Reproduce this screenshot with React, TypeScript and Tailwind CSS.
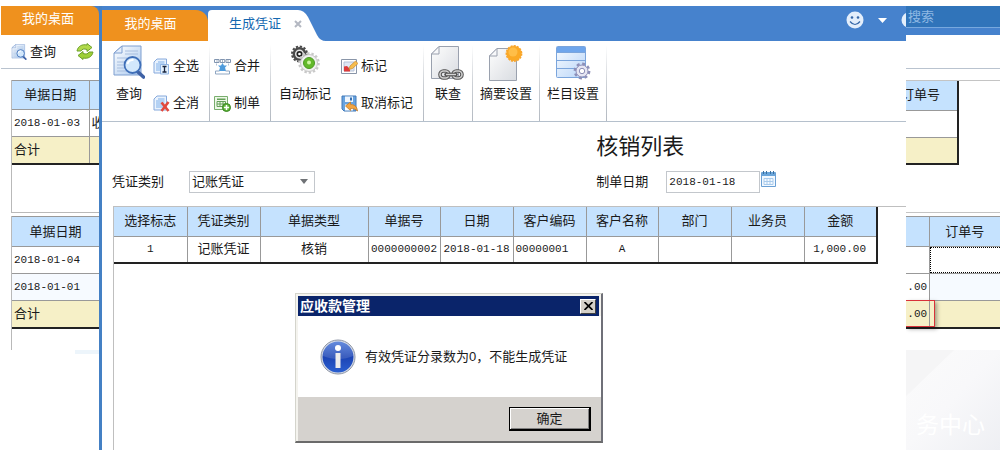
import React, { useState } from 'react';

interface IconProps {
  className?: string;
}

const QueryIcon: React.FC<IconProps> = ({ className }) => (
  <svg viewBox="0 0 32 34" className={className} aria-hidden="true">
    <defs>
      <linearGradient id="sheet" x1="0" y1="0" x2="1" y2="1">
        <stop offset="0" stopColor="#ffffff" />
        <stop offset="1" stopColor="#a9c8ee" />
      </linearGradient>
    </defs>
    <path d="M9 1h19v29H1V8z" fill="url(#sheet)" stroke="#7f9fd0" />
    <path d="M9 1v7H1z" fill="#e4eefb" stroke="#7f9fd0" />
    <path d="M12 6h13M12 9h13M4 13h21M4 17h8M4 20h6M4 23h7M4 26h9" stroke="#a8bede" />
    <path d="M25 27l5.500 5" stroke="#3f62a6" strokeWidth="3.600" strokeLinecap="round" />
    <circle cx="19.500" cy="20" r="8" fill="#d3e8fc" stroke="#3f6fb8" strokeWidth="1.800" />
    <path d="M14.500 19a5.500 5.500 0 0 1 6-4" fill="none" stroke="#fff" strokeWidth="2" />
  </svg>
);

const RefreshIcon: React.FC<IconProps> = ({ className }) => (
  <svg viewBox="0 0 18 17" className={className} aria-hidden="true">
    <path
      d="M1 8c1-5 5-7 10-6V0.500l5 4-5 4V6.500C8 5.500 6 6 5 8z"
      fill="#b0d94a"
      stroke="#6da02c"
    />
    <path
      d="M17 9c-1 5-5 7-10 6v1.500l-5-4 5-4v2c3 1 5 0.500 6-1.500z"
      fill="#9dcf38"
      stroke="#6da02c"
    />
  </svg>
);

const Sheet = () => (
  <>
    <path d="M4 1h9.500v14H1V4z" fill="#e9f2fd" stroke="#86a9dc" />
    <path d="M5 4h6.500M3 6h8.500M3 8h8.500M3 10h8.500M3 12h8.500" stroke="#7fb0ea" />
  </>
);

const SelectAllIcon: React.FC<IconProps> = ({ className }) => (
  <svg viewBox="0 0 17 17" className={className} aria-hidden="true">
    <Sheet />
    <path d="M7.500 6.500h8v9.500h-8z" fill="#e3f0fd" stroke="#8fb4e4" />
    <path d="M9.500 8.500h4M9.500 14h4M11.500 8.500V14" stroke="#17233c" strokeWidth="1.300" />
  </svg>
);

const ClearAllIcon: React.FC<IconProps> = ({ className }) => (
  <svg viewBox="0 0 17 17" className={className} aria-hidden="true">
    <Sheet />
    <path d="M8.500 7.500l7 8.500M15.500 7l-7 9" stroke="#e2493d" strokeWidth="2.600" />
  </svg>
);

const MergeIcon: React.FC<IconProps> = ({ className }) => (
  <svg viewBox="0 0 17 17" className={className} aria-hidden="true">
    <path d="M.5 1.500h4.500v3H.5zM6.250 1.500h4.500v3h-4.500zM12 1.500h4.500v3H12z" fill="#fff" stroke="#8195b0" />
    <path d="M2.500 3h1M8 3h1M13.500 3h1" stroke="#556b8a" />
    <path d="M8.500 5l1.500 2.500h3L11 9.500l1 3.500H5l1-3.500-2-2h3z" fill="#4e9bdc" />
    <path d="M5.500 13H1.500v3h14v-3h-4" fill="none" stroke="#8fa6c2" />
    <path d="M2.500 5.500v2M14.500 5.500v2" stroke="#b3c2d6" />
  </svg>
);

const VoucherIcon: React.FC<IconProps> = ({ className }) => (
  <svg viewBox="0 0 17 17" className={className} aria-hidden="true">
    <path d="M.5 1.500h13v13H.5z" fill="#eef8e8" stroke="#79ae6d" />
    <path d="M3 3.500h8.500V5H3z" fill="#65a058" />
    <path d="M3 6.500h8.500v5H3zM3 9h8.500M6 6.500v5M9 6.500v5" fill="none" stroke="#65a058" />
    <circle cx="12.500" cy="12.500" r="4" fill="#5fb53a" stroke="#388420" />
    <path d="M12.500 10v5M10 12.500h5" stroke="#fff" strokeWidth="1.500" />
  </svg>
);

const GearsIcon: React.FC<IconProps> = ({ className }) => (
  <svg viewBox="0 0 30 30" className={className} aria-hidden="true">
    <circle cx="9.500" cy="9" r="7.500" fill="none" stroke="#4a4a4a" strokeWidth="2" strokeDasharray="2.300 1.630" />
    <circle cx="9.500" cy="9" r="5.700" fill="#e4e4e4" stroke="#4a4a4a" strokeWidth="2.400" />
    <circle cx="9.500" cy="9" r="2.200" fill="#fff" stroke="#222" strokeWidth="1.700" />
    <circle cx="19" cy="18" r="9.700" fill="none" stroke="#c9c9c9" strokeWidth="2.200" strokeDasharray="2.400 1.950" />
    <circle cx="19" cy="18" r="8.500" fill="#f0f0f0" stroke="#c6c6c6" />
    <circle cx="19" cy="18" r="5.500" fill="#63b92b" stroke="#4d9a26" />
    <circle cx="19" cy="17.500" r="2" fill="#cdf4a2" />
  </svg>
);

const MarkIcon: React.FC<IconProps> = ({ className }) => (
  <svg viewBox="0 0 17 17" className={className} aria-hidden="true">
    <path d="M.5 1.500h15v14H.5z" fill="#fff" stroke="#8995a8" />
    <path d="M3 4h10v9H3z" fill="#dfe7f5" stroke="#b6c2d6" />
    <path d="M3 8.500l3-.5 3 3v2.500H3z" fill="#dc3b3b" />
    <path d="M8 11.500l1-3.500 5.500-5L17 5.500 11.500 10.500z" fill="#f7bd4e" stroke="#c98a30" strokeWidth=".7" />
  </svg>
);

const UnmarkIcon: React.FC<IconProps> = ({ className }) => (
  <svg viewBox="0 0 17 17" className={className} aria-hidden="true">
    <path d="M1 1h14v15H3l-2-2z" fill="#68a3df" stroke="#4179b8" />
    <path d="M4 1.500h8V7H4z" fill="#eff6fe" />
    <path d="M9 2.500h2v3H9z" fill="#376fae" />
    <path d="M4 9.500h8v6H4z" fill="#fff" />
    <path d="M4.500 11l5-4v2.500c4 0 6.500 2 7 6.500-2-2-4-2.500-7-2.500V15.500z" fill="#f2a441" stroke="#c07a28" strokeWidth=".8" />
  </svg>
);

const PlainSheet = () => (
  <>
    <defs>
      <linearGradient id="plain" x1="0" y1="0" x2="1" y2="1">
        <stop offset="0" stopColor="#fdfdfd" />
        <stop offset="1" stopColor="#d9dce1" />
      </linearGradient>
    </defs>
    <path d="M8 1.500h19.500v32H.5V9z" fill="url(#plain)" stroke="#9aa1ae" />
    <path d="M8 1.500V9H.5z" fill="#f7f8fa" stroke="#9aa1ae" />
  </>
);

const LinkQueryIcon: React.FC<IconProps> = ({ className }) => (
  <svg viewBox="0 0 34 36" className={className} aria-hidden="true">
    <PlainSheet />
    <g fill="none" stroke="#555" strokeWidth="3.600">
      <rect x="9" y="26" width="9" height="7" rx="3.500" />
      <rect x="22" y="26" width="9" height="7" rx="3.500" />
    </g>
    <g fill="none" stroke="#cfcfcf" strokeWidth="1.600">
      <rect x="9" y="26" width="9" height="7" rx="3.500" />
      <rect x="22" y="26" width="9" height="7" rx="3.500" />
    </g>
    <path d="M15 29.500h10" stroke="#555" strokeWidth="3.500" strokeLinecap="round" />
    <path d="M15 29.500h10" stroke="#d5d5d5" strokeWidth="1.400" />
  </svg>
);

const SummaryIcon: React.FC<IconProps> = ({ className }) => (
  <svg viewBox="0 0 34 36" className={className} aria-hidden="true">
    <g transform="translate(0 2)">
      <PlainSheet />
    </g>
    <circle cx="25" cy="8.500" r="7.600" fill="#fba925" stroke="#f8a52c" strokeWidth="1.600" strokeDasharray="2.200 1" />
    <circle cx="24" cy="7" r="4.500" fill="#ffbe48" />
  </svg>
);

const ColumnIcon: React.FC<IconProps> = ({ className }) => (
  <svg viewBox="0 0 35 36" className={className} aria-hidden="true">
    <defs>
      <linearGradient id="rows" x1="0" y1="0" x2="1" y2="1">
        <stop offset="0" stopColor="#f7fbff" />
        <stop offset="1" stopColor="#b9d5f8" />
      </linearGradient>
    </defs>
    <rect x=".5" y="1.500" width="29" height="31" rx="1" fill="url(#rows)" stroke="#7ba5dc" />
    <path d="M1 2h28v5H1z" fill="#6fa6ec" />
    <path d="M1 7.500h28M1 15.500h28M1 23.500h28" stroke="#7ba5dc" />
    <circle cx="26" cy="26" r="7.200" fill="none" stroke="#8d8fb8" strokeWidth="2.400" strokeDasharray="3 2.650" />
    <circle cx="26" cy="26" r="6" fill="#e6e6f3" stroke="#8d8fb8" />
    <circle cx="26" cy="26" r="2.700" fill="#fff" stroke="#8d8fb8" />
  </svg>
);

const CalendarIcon: React.FC<IconProps> = ({ className }) => (
  <svg viewBox="0 0 15 16" className={className} aria-hidden="true">
    <path d="M.5 1.500h14v14H.5z" fill="#f3f9ff" stroke="#6ba0d4" />
    <path d="M1 1h13v4H1z" fill="#6aa5da" />
    <path d="M2.500 0v3M5.500 0v3M9.500 0v3M12.500 0v3" stroke="#3c709f" />
    <path d="M3 7.500h9v6H3zM3 10.500h9M6 7.500v6M9 7.500v6" fill="none" stroke="#a9cbec" />
  </svg>
);

const InfoIcon: React.FC<IconProps> = ({ className }) => (
  <svg viewBox="0 0 36 36" className={className} aria-hidden="true">
    <defs>
      <linearGradient id="info" x1="0" y1="0" x2="0" y2="1">
        <stop offset="0" stopColor="#4b78d8" />
        <stop offset=".5" stopColor="#1c44b4" />
        <stop offset="1" stopColor="#2a5fd0" />
      </linearGradient>
    </defs>
    <circle cx="18" cy="18" r="17" fill="#d6dbe6" stroke="#8e96a6" />
    <circle cx="18" cy="18" r="15.500" fill="url(#info)" />
    <path d="M3 17a15 15 0 0 1 30 0c-8 4-21 4-30 0z" fill="#fff" opacity=".14" />
    <circle cx="18" cy="9" r="3" fill="#fff" />
    <rect x="15.500" y="14" width="5" height="15" fill="#ececec" />
  </svg>
);

const ToolButton = ({ icon, label }: { icon: React.ReactNode; label: string }) => (
  <button className="flex h-[18px] items-center gap-[3px] whitespace-nowrap leading-[18px]">
    {icon}
    {label}
  </button>
);

const BigButton = ({ icon, label }: { icon: React.ReactNode; label: string }) => (
  <button className="flex flex-col items-center whitespace-nowrap">
    <span className="flex h-10 items-start">{icon}</span>
    <span className="leading-[18px]">{label}</span>
  </button>
);

const Separator = () => (
  <div className="w-px shrink-0 bg-linear-to-b from-white via-[#cdd1d6] to-[#b4bac2]" />
);

const columns = [
  { name: '选择标志', width: 'w-[73px]', value: '1', align: 'text-center' },
  { name: '凭证类别', width: 'w-[73px]', value: '记账凭证', align: 'text-center' },
  { name: '单据类型', width: 'w-[108px]', value: '核销', align: 'text-center' },
  { name: '单据号', width: 'w-[72px]', value: '0000000002', align: 'text-center' },
  { name: '日期', width: 'w-[73px]', value: '2018-01-18', align: 'text-center' },
  { name: '客户编码', width: 'w-[73px]', value: '00000001', align: 'text-left' },
  { name: '客户名称', width: 'w-[72px]', value: 'A', align: 'text-center' },
  { name: '部门', width: 'w-[73px]', value: '', align: 'text-center' },
  { name: '业务员', width: 'w-[73px]', value: '', align: 'text-center' },
  { name: '金额', width: 'w-[73px]', value: '1,000.00', align: 'text-right' },
];

const mono = "font-['Liberation_Mono','Noto_Sans_CJK_SC',monospace] text-[11px]";

const LeftWindow = () => (
  <aside className="flex w-[99px] shrink-0 flex-col overflow-hidden pl-px">
    <div className="bg-[#4682cd]">
      <button className="block h-[29px] w-full rounded-tr-lg bg-[#ef911e] pb-1 pr-1 text-white">我的桌面</button>
    </div>
    <div className="flex h-[34px] items-center gap-5 border-b border-[#b9c3cf] pl-[10px]">
      <ToolButton icon={<QueryIcon className="h-4 w-4" />} label="查询" />
      <button aria-label="刷新">
        <RefreshIcon className="h-[17px] w-[18px]" />
      </button>
    </div>
    <div className="ml-[10px] mt-[11px] h-[133px] border-b border-l border-[#b9b9b9]">
      <table className="w-full table-fixed border-collapse border-b-2 border-[#222]">
        <colgroup>
          <col />
          <col className="w-[10px]" />
        </colgroup>
        <thead>
          <tr className="h-[29px] bg-[#c5e2fe]">
            <th className="border-y border-r border-[#999] font-normal">单据日期</th>
            <th className="border-y border-[#999]" />
          </tr>
        </thead>
        <tbody>
          <tr className="h-[27px]">
            <td className={`border-b border-r border-[#999] pl-0.5 ${mono}`}>2018-01-03</td>
            <td className="overflow-hidden whitespace-nowrap border-b border-[#999] pl-0.5">收</td>
          </tr>
          <tr className="h-[27px] bg-[#f6f0c7]">
            <td className="border-r border-[#999] pl-0.5">合计</td>
            <td />
          </tr>
        </tbody>
      </table>
    </div>
    <div className="ml-[10px] mt-[3px] h-[134px] border-l border-[#b9b9b9]">
      <table className="w-full border-collapse border-b-2 border-[#222]">
        <thead>
          <tr className="h-[30px] bg-[#c5e2fe]">
            <th className="border-y border-[#999] font-normal">单据日期</th>
          </tr>
        </thead>
        <tbody>
          <tr className="h-[27px]">
            <td className={`border-b border-[#999] pl-0.5 ${mono}`}>2018-01-04</td>
          </tr>
          <tr className="h-[27px] bg-[#f6faff]">
            <td className={`border-b border-[#999] pl-0.5 ${mono}`}>2018-01-01</td>
          </tr>
          <tr className="h-[27px] bg-[#f6f0c7]">
            <td className="pl-0.5">合计</td>
          </tr>
        </tbody>
      </table>
    </div>
    <div className="ml-auto h-1 w-6 bg-[#edf5fb]" />
  </aside>
);

const RightWindow = () => (
  <aside className="flex w-[94px] shrink-0 flex-col overflow-hidden">
    <div className="h-[29px] bg-[#4682cd]">
      <input
        aria-label="搜索"
        placeholder="搜索"
        className="block h-[22px] w-full border-b border-[#77a8de] bg-[#3074ba] pl-0.5 outline-none placeholder:text-[#8fb9e4]"
      />
    </div>
    <div className="h-[34px] border-b border-[#b9c3cf]" />
    <div className="mt-[11px] h-[133px] border-y border-[#c4c4c4]">
      <table className="w-[53px] table-fixed border-collapse border-b-2 border-r-2 border-[#222]">
        <thead>
          <tr className="h-[29px] bg-[#c5e2fe]">
            <th className="border-b border-b-[#999] p-0 font-normal">
              <div className="flex justify-end overflow-hidden whitespace-nowrap pr-[17px]">订单号</div>
            </th>
          </tr>
        </thead>
        <tbody>
          <tr className="h-[27px]">
            <td className="border-b border-b-[#999]" />
          </tr>
          <tr className="h-[27px] bg-[#f6f0c7]">
            <td />
          </tr>
        </tbody>
      </table>
    </div>
    <div className="relative mt-[3px] h-[134px]">
      <table className="w-full table-fixed border-collapse border-b-2 border-[#222]">
        <colgroup>
          <col className="w-[23px]" />
          <col />
        </colgroup>
        <thead>
          <tr className="h-[30px] bg-[#c5e2fe]">
            <th className="border-y border-r border-[#999]" />
            <th className="border-y border-[#999] font-normal">订单号</th>
          </tr>
        </thead>
        <tbody>
          <tr className="h-[27px]">
            <td className="border-b border-r border-[#999]" />
            <td className="p-0">
              <div className="h-[26px] border border-r-0 border-dotted border-black" />
            </td>
          </tr>
          <tr className="h-[27px]">
            <td className={`border-y border-r border-[#999] p-0 text-center ${mono}`}>.00</td>
            <td className="border-y border-[#999] bg-[#f6faff]" />
          </tr>
          <tr className="h-[27px] bg-[#f6f0c7]">
            <td className={`border-r border-[#999] p-0 text-center ${mono}`}>.00</td>
            <td />
          </tr>
        </tbody>
      </table>
      <div className="absolute left-0 top-[84px] h-[27px] w-[29px] border border-l-0 border-[#d8323a] shadow-[2px_2px_4px_rgba(0,0,0,0.35)]" />
    </div>
    <div className="relative flex flex-1 items-end overflow-hidden bg-linear-to-br from-[#fbfbfb] via-[#f8f8fa] to-[#eeeff3] pb-4 pl-[10px] text-[23px] text-white">
      <svg viewBox="0 0 48 46" className="absolute left-0 top-0 h-[46px] w-12" aria-hidden="true">
        <path d="M0 0h48L0 46z" fill="#f5f5f6" />
      </svg>
      <span className="relative">务中心</span>
    </div>
  </aside>
);

const Header = () => (
  <header className="flex h-[35px] bg-[#4682cd] pt-1">
    <button className="w-[106px] rounded-tr-xl bg-[#ef911e] pr-[9px] pb-1 text-white">我的桌面</button>
    <div className="relative flex w-[122px] items-center pb-1 pl-[21px] text-[#1568b0]">
      <svg viewBox="0 0 122 31" preserveAspectRatio="none" className="absolute inset-0 h-full w-full" aria-hidden="true">
        <path d="M0 31V4Q0 0 4 0H90Q96 0 100 7L109 25Q112 31 118 31z" fill="#fff" />
      </svg>
      <button className="relative">生成凭证</button>
      <button aria-label="关闭标签" className="relative ml-[13px]">
        <svg viewBox="0 0 8 8" className="h-2 w-2" aria-hidden="true">
          <path d="M1 1l6 6M7 1L1 7" stroke="#b4b8c2" strokeWidth="2" />
        </svg>
      </button>
    </div>
    <div className="ml-auto flex items-center gap-[14px] overflow-hidden pb-[11px]">
      <button aria-label="表情">
        <svg viewBox="0 0 18 18" className="h-[18px] w-[18px]" aria-hidden="true">
          <circle cx="9" cy="9" r="8.500" fill="#e3eefb" />
          <circle cx="6" cy="6.500" r="1.300" fill="#3567a8" />
          <circle cx="12" cy="6.500" r="1.300" fill="#3567a8" />
          <path d="M4 10.500q5 6 10 0" fill="none" stroke="#3567a8" strokeWidth="1.200" />
        </svg>
      </button>
      <button aria-label="更多">
        <svg viewBox="0 0 9 5" className="h-[5px] w-[9px]" aria-hidden="true">
          <path d="M0 0h9L4.500 5z" fill="#fff" />
        </svg>
      </button>
      <svg viewBox="0 0 5 16" className="h-4 w-[5px]" aria-hidden="true">
        <circle cx="8" cy="8" r="7.500" fill="#e3eefb" />
      </svg>
    </div>
  </header>
);

const Toolbar = () => (
  <div className="flex h-[81px] border-b border-[#b5c0cc] pt-1">
    <div className="flex gap-2 pl-[11px] pr-[10px]">
      <BigButton icon={<QueryIcon className="h-[34px] w-8" />} label="查询" />
      <div className="flex flex-col gap-[19px] pt-3">
        <ToolButton icon={<SelectAllIcon className="h-[17px] w-[17px]" />} label="全选" />
        <ToolButton icon={<ClearAllIcon className="h-[17px] w-[17px]" />} label="全消" />
      </div>
    </div>
    <Separator />
    <div className="flex flex-col gap-[19px] pl-1 pr-[10px] pt-3">
      <ToolButton icon={<MergeIcon className="h-[17px] w-[17px]" />} label="合并" />
      <ToolButton icon={<VoucherIcon className="h-[17px] w-[17px]" />} label="制单" />
    </div>
    <Separator />
    <div className="flex gap-[10px] pl-2 pr-[10px]">
      <BigButton icon={<GearsIcon className="h-[30px] w-[30px]" />} label="自动标记" />
      <div className="flex flex-col gap-[19px] pt-3">
        <ToolButton icon={<MarkIcon className="h-[17px] w-[17px]" />} label="标记" />
        <ToolButton icon={<UnmarkIcon className="h-[17px] w-[17px]" />} label="取消标记" />
      </div>
    </div>
    <Separator />
    <div className="flex px-[7px]">
      <BigButton icon={<LinkQueryIcon className="h-9 w-[34px]" />} label="联查" />
    </div>
    <Separator />
    <div className="flex px-[7px]">
      <BigButton icon={<SummaryIcon className="h-9 w-[34px]" />} label="摘要设置" />
    </div>
    <Separator />
    <div className="flex px-[7px]">
      <BigButton icon={<ColumnIcon className="h-9 w-[35px]" />} label="栏目设置" />
    </div>
    <Separator />
  </div>
);

const MessageDialog = ({ onClose }: { onClose: () => void }) => (
  <div
    role="dialog"
    aria-label="应收款管理"
    className="absolute left-[193px] top-[287px] w-[308px] border-b-2 border-l border-r-2 border-t border-b-[#6a6a6a] border-l-[#d4d4cc] border-r-[#6f7078] border-t-[#d4d4cc] bg-[#f4f3ee] pl-0.5 pt-0.5"
  >
    <div className="mr-0.5 flex h-5 items-center justify-between bg-[#0a246a] pl-0.5 pr-[3px] font-bold text-white">
      <span className="text-sm leading-5">应收款管理</span>
      <button
        aria-label="关闭"
        onClick={onClose}
        className="flex h-[15px] w-4 items-center justify-center border border-b-[#404040] border-l-white border-r-[#404040] border-t-white bg-[#d4d0c8]"
      >
        <svg viewBox="0 0 9 8" className="h-2 w-[9px]" aria-hidden="true">
          <path d="M.5 0l8 8M8.500 0l-8 8" stroke="#000" strokeWidth="1.700" />
        </svg>
      </button>
    </div>
    <div className="flex h-[81px] items-center gap-[9px] bg-white pl-[22px]">
      <InfoIcon className="h-9 w-9" />
      <p className="whitespace-nowrap">有效凭证分录数为0，不能生成凭证</p>
    </div>
    <div className="flex h-11 items-center justify-end bg-[#d5d2ce] pr-[10px]">
      <button
        onClick={onClose}
        className="h-6 w-[82px] border border-b-2 border-r-2 border-black bg-[#d5d2ce] leading-5 shadow-[inset_1px_1px_0_#fff,inset_-1px_-1px_0_#808080]"
      >
        确定
      </button>
    </div>
  </div>
);

const App: React.FC = () => {
  const [open, setOpen] = useState(true);
  const [date, setDate] = useState('2018-01-18');

  return (
    <div className="flex min-h-screen overflow-hidden bg-white pt-1.5 font-['Liberation_Sans','Noto_Sans_CJK_SC',sans-serif] text-[13px] leading-[18px] text-[#1a1a1a]">
      <LeftWindow />

      <main className="relative flex min-w-0 flex-1 flex-col border-l-3 border-[#4480c4] bg-white">
        <Header />
        <Toolbar />

        <section className="grid grid-cols-[61%_1fr] pl-[10px] pt-[10px]">
          <h1 className="col-start-2 text-[22px] leading-[30px]">核销列表</h1>
          <div className="mt-[9px] flex items-center gap-[25px]">
            <label htmlFor="voucher-type">凭证类别</label>
            <div className="relative">
              <select
                id="voucher-type"
                className="block h-[22px] w-[126px] appearance-none border border-[#c3c7cc] bg-white pl-0.5 outline-none"
              >
                <option>记账凭证</option>
              </select>
              <svg viewBox="0 0 8 5" className="pointer-events-none absolute right-[7px] top-2 h-[5px] w-2" aria-hidden="true">
                <path d="M0 0h8L4 5z" fill="#6f7276" />
              </svg>
            </div>
          </div>
          <div className="mt-[9px] flex items-center">
            <label htmlFor="make-date" className="mr-[18px]">
              制单日期
            </label>
            <input
              id="make-date"
              value={date}
              onChange={(e) => setDate(e.target.value)}
              className={`h-[22px] w-[94px] border border-[#c3c7cc] pl-0.5 outline-none ${mono}`}
            />
            <button aria-label="选择日期" className="ml-px pb-1.5">
              <CalendarIcon className="h-4 w-[15px]" />
            </button>
          </div>
        </section>

        {/* 单据明细 */}
        <section className="ml-[11px] mt-[13px] flex-1 border-l border-t border-[#bfbfbf] pr-[30px]">
          <table className="w-full table-fixed border-collapse border-b-2 border-r-2 border-b-[#222] border-r-[#222]">
            <thead>
              <tr className="h-[29px] bg-[#c5e2fe]">
                {columns.map((col) => (
                  <th
                    key={col.name}
                    className={`border-b border-r border-[#999] p-0 font-normal last:border-r-2 last:border-r-[#222] ${col.width}`}
                  >
                    {col.name}
                  </th>
                ))}
              </tr>
            </thead>
            <tbody>
              <tr className="h-[27px]">
                {columns.map((col) => (
                  <td
                    key={col.name}
                    className={`border-r border-r-[#999] p-0 last:border-r-2 last:border-r-[#222] last:pr-[10px] ${col.align} ${
                      /^[\x20-\x7e]+$/.test(col.value) ? mono : ''
                    } ${col.align === 'text-left' ? 'pl-0.5' : ''}`}
                  >
                    {col.value}
                  </td>
                ))}
              </tr>
            </tbody>
          </table>
        </section>

        {open && <MessageDialog onClose={() => setOpen(false)} />}
      </main>

      <RightWindow />
    </div>
  );
};

export default App;
